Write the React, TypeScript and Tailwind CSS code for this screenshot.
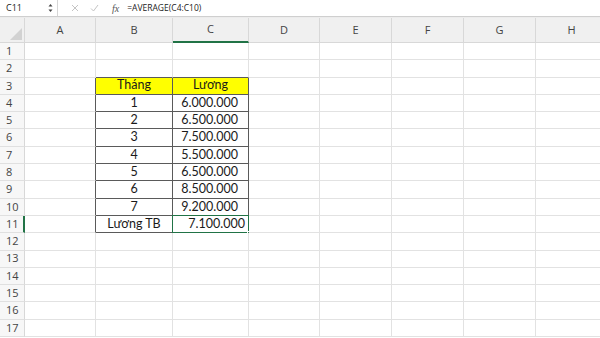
import React from "react";

const cols = ["A", "B", "C", "D", "E", "F", "G", "H"];

type Row = { b?: string; c?: string; yellow?: boolean; cAlign?: "center" | "right" };
const data: Record<number, Row> = {
  3: { b: "Tháng", c: "Lương", yellow: true },
  4: { b: "1", c: "6.000.000" },
  5: { b: "2", c: "6.500.000" },
  6: { b: "3", c: "7.500.000" },
  7: { b: "4", c: "5.500.000" },
  8: { b: "5", c: "6.500.000" },
  9: { b: "6", c: "8.500.000" },
  10: { b: "7", c: "9.200.000" },
  11: { b: "Lương TB", c: "7.100.000", cAlign: "right" },
};

const inTable = (r: number) => r >= 3 && r <= 11;

function Cell({ r, col }: { r: number; col: number }) {
  // col: 0=A ... 7=H
  const d = data[r];
  const isB = col === 1;
  const isC = col === 2;
  const tableCell = inTable(r) && (isB || isC);
  const rightDark = inTable(r) && (col === 0 || col === 1 || col === 2);
  const bottomDark = (r === 2 || inTable(r)) && (isB || isC);
  const bg = tableCell && d?.yellow ? "bg-[#ffff00]" : "bg-white";
  const rc = rightDark ? "border-r-[#5a5a5a]" : "border-r-[#e2e2e2]";
  const bc = bottomDark ? "border-b-[#5a5a5a]" : "border-b-[#e2e2e2]";
  let text: string | undefined;
  let align = "justify-center";
  if (tableCell) {
    text = isB ? d?.b : d?.c;
    if (isC) align = d?.cAlign === "right" ? "justify-end pr-[3px]" : "justify-end pr-[10px]";
    if (isC && d?.yellow) align = "justify-center";
  }
  const selected = r === 11 && isC;
  return (
    <div className={`relative flex items-center ${align} border-r border-b ${rc} ${bc} ${bg} text-[12.5px] text-[#1a1a1a] leading-none`}>
      {text}
      {selected && (
        <>
          <div className="absolute -left-[1px] -top-[1px] right-[-1px] bottom-[-1px] border-[1.5px] border-[#217346] pointer-events-none" />
          <div className="absolute right-[-3px] bottom-[-3px] w-[4px] h-[4px] bg-[#217346] border border-white" />
        </>
      )}
    </div>
  );
}

export default function App() {
  const rows = Array.from({ length: 17 }, (_, i) => i + 1);
  return (
    <div className="w-[600px] h-[338px] overflow-hidden bg-white" style={{ fontFamily: "Lato, 'Open Sans', sans-serif" }}>
      {/* Formula bar */}
      <div className="h-[16px] flex items-center bg-white text-[9px] text-[#222]" style={{ fontFamily: "'Open Sans', 'Liberation Sans', sans-serif" }}>
        <div className="w-[58px] h-full flex items-center justify-between pl-[6px] pr-[4px] border-r border-[#d6d6d6]">
          <span>C11</span>
          <svg width="5" height="10" viewBox="0 0 5 10">
            <path d="M0.5 3.5 L2.5 1 L4.5 3.5 Z" fill="#444" />
            <path d="M0.5 6.5 L2.5 9 L4.5 6.5 Z" fill="#444" />
          </svg>
        </div>
        <div className="w-[12px]" />
        <svg width="8" height="8" viewBox="0 0 8 8" className="ml-[1px]">
          <path d="M1 1 L7 7 M7 1 L1 7" stroke="#c4c4c4" strokeWidth="1" />
        </svg>
        <svg width="9" height="8" viewBox="0 0 9 8" className="ml-[11px]">
          <path d="M1 4.5 L3.5 7 L8 1" stroke="#c4c4c4" strokeWidth="1" fill="none" />
        </svg>
        <span className="ml-[13px] italic text-[#555] text-[10px]" style={{ fontFamily: "'Liberation Serif', serif" }}>fx</span>
        <span className="ml-[8px] text-[8.5px]">=AVERAGE(C4:C10)</span>
      </div>
      <div className="h-[1px] bg-[#cfcfcf]" />
      <div className="h-[1px] bg-[#ececec]" />
      {/* Grid */}
      <div className="grid grid-cols-[25px_71px_77px_76px_71px_72px_72px_72px_72px] grid-rows-[25px_repeat(17,17.3px)]">
        {/* corner */}
        <div className="relative bg-[#f0f0f0] border-r border-b border-[#d8d8d8]">
          <svg className="absolute right-[2px] bottom-[2px]" width="12" height="12" viewBox="0 0 12 12">
            <path d="M12 0 L12 12 L0 12 Z" fill="#d2d2d2" />
          </svg>
        </div>
        {cols.map((c) => (
          <div
            key={c}
            className={`flex items-center justify-center bg-[#f0f0f0] border-r border-[#d8d8d8] text-[11px] text-[#444] ${c === "C" ? "border-b-2 border-b-[#217346] text-[#1e6b40] bg-[#e6e6e6]" : "border-b"}`}
            style={{ fontFamily: "'Open Sans', sans-serif" }}
          >
            {c}
          </div>
        ))}
        {rows.map((r) => (
          <React.Fragment key={r}>
            <div
              className={`flex items-center pl-[6px] bg-[#f7f7f7] border-b border-[#e0e0e0] text-[11px] text-[#444] ${r === 11 ? "border-r-2 border-r-[#217346] text-[#1e6b40] bg-[#e9e9e9]" : "border-r border-r-[#d8d8d8]"}`}
              style={{ fontFamily: "'Open Sans', sans-serif" }}
            >
              {r}
            </div>
            {cols.map((_, ci) => (
              <Cell key={ci} r={r} col={ci} />
            ))}
          </React.Fragment>
        ))}
      </div>
    </div>
  );
}
